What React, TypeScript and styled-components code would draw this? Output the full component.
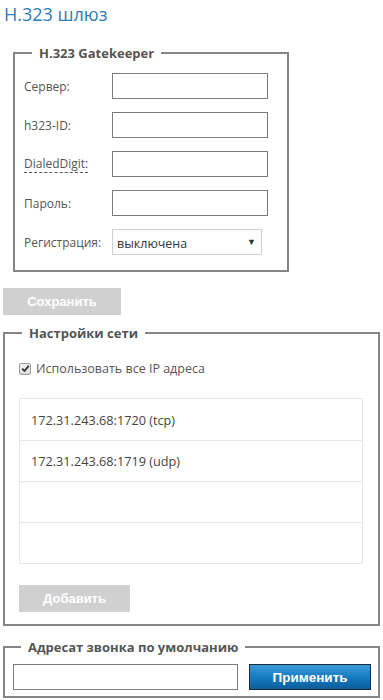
import * as React from 'react';
import styled, { createGlobalStyle } from 'styled-components';

const GlobalStyle = createGlobalStyle`
  html, body {
    margin: 0;
    padding: 0;
    background: #fff;
  }
  body {
    font-family: 'Open Sans', 'Liberation Sans', sans-serif;
    color: #555;
  }
`;

const Page = styled.div`
  width: 383px;
  padding: 2px 3px 0 3px;
  box-sizing: border-box;
`;

const Title = styled.h1`
  margin: 0 0 18px 1px;
  font-size: 18px;
  font-weight: 400;
  line-height: 24px;
  color: #2b7cb8;
`;

const Group = styled.fieldset<{ $indent?: number; $width: number }>`
  margin: 0 0 0 ${(p) => p.$indent || 0}px;
  width: ${(p) => p.$width}px;
  box-sizing: border-box;
  border: 2px solid #858585;
  padding: 0 9px 15px 9px;
  min-width: 0;
`;

const Legend = styled.legend`
  font-size: 13px;
  font-weight: 700;
  color: #555;
  padding: 0 7px;
  margin-left: 8px;
  line-height: 18px;
`;

const FormGrid = styled.div`
  display: grid;
  grid-template-columns: 88px 156px;
  row-gap: 13px;
  align-items: center;
  margin-top: 11px;
`;

const Label = styled.label<{ $dotted?: boolean }>`
  font-size: 12px;
  color: #555;
  justify-self: start;
  line-height: 17px;
  border-bottom: ${(p) => (p.$dotted ? '1px dashed #555' : 'none')};
`;

const TextInput = styled.input`
  width: 156px;
  height: 26px;
  box-sizing: border-box;
  border: 1px solid #7c7c7c;
  background: #fff;
  padding: 2px 4px;
  font-family: inherit;
  font-size: 13px;
  outline: none;
`;

const SelectBox = styled.div`
  width: 150px;
  height: 26px;
  box-sizing: border-box;
  border: 1px solid #cfcfcf;
  display: flex;
  align-items: center;
  justify-content: space-between;
  padding: 3px 5px 0 4px;
  font-size: 12.5px;
  color: #333;
`;

const Arrow = styled.span`
  font-size: 9px;
  color: #333;
  margin-top: -4px;
`;

const GrayButton = styled.button<{ $width: number }>`
  width: ${(p) => p.$width}px;
  height: 27px;
  border: none;
  background: #d0d0d0;
  color: #fff;
  font-family: 'Liberation Sans', Arial, sans-serif;
  font-weight: 700;
  font-size: 13px;
  padding: 0;
  cursor: default;
`;

const SaveRow = styled.div`
  margin: 16px 0 9px 0;
`;

const CheckRow = styled.label`
  display: flex;
  align-items: center;
  gap: 5px;
  margin: 18px 0 0 5px;
  font-size: 12.5px;
  color: #555;
`;

const CheckBox = styled.span`
  width: 12px;
  height: 12px;
  box-sizing: border-box;
  border: 1px solid #9a9a9a;
  border-radius: 2px;
  background: linear-gradient(#f4f4f4, #dcdcdc);
  display: flex;
  align-items: center;
  justify-content: center;
`;

const AddrList = styled.ul`
  list-style: none;
  margin: 21px 0 0 5px;
  padding: 0;
  width: 344px;
  box-sizing: border-box;
  border: 1px solid #e2e9ec;
`;

const AddrItem = styled.li`
  height: 41px;
  box-sizing: border-box;
  border-top: 1px solid #e2e9ec;
  padding: 0 11px;
  display: flex;
  align-items: center;
  font-size: 12.7px;
  color: #444;

  &:first-child {
    border-top: none;
  }
`;

const AddRow = styled.div`
  margin: 21px 0 0 5px;
`;

const NetGroup = styled(Group)`
  padding-bottom: 12px;
`;

const CallGroup = styled(Group)`
  margin-top: 12px;
  padding: 0 7px 6px 8px;
`;

const CallRow = styled.div`
  display: flex;
  align-items: center;
  gap: 11px;
  margin-top: 8px;
`;

const CallInput = styled(TextInput)`
  width: 225px;
`;

const BlueButton = styled.button`
  width: 122px;
  height: 26px;
  box-sizing: border-box;
  border: 1px solid #1c2a38;
  background: linear-gradient(#3a9ad8, #1479c0 55%, #0d5c9a);
  color: #fff;
  font-family: 'Liberation Sans', Arial, sans-serif;
  font-weight: 700;
  font-size: 13.5px;
  padding: 0;
`;

const fields = [
  { label: 'Сервер:' },
  { label: 'h323-ID:' },
  { label: 'DialedDigit:', dotted: true },
  { label: 'Пароль:' },
];

const addresses = ['172.31.243.68:1720 (tcp)', '172.31.243.68:1719 (udp)', '', ''];

export default function App() {
  return (
    <Page>
      <GlobalStyle />
      <Title>H.323 шлюз</Title>
      <Group $indent={10} $width={276}>
        <Legend>H.323 Gatekeeper</Legend>
        <FormGrid>
          {fields.map((f) => (
            <React.Fragment key={f.label}>
              <Label $dotted={f.dotted}>{f.label}</Label>
              <TextInput />
            </React.Fragment>
          ))}
          <Label>Регистрация:</Label>
          <SelectBox>
            <span>выключена</span>
            <Arrow>▼</Arrow>
          </SelectBox>
        </FormGrid>
      </Group>
      <SaveRow>
        <GrayButton $width={118}>Сохранить</GrayButton>
      </SaveRow>
      <NetGroup $width={377}>
        <Legend>Настройки сети</Legend>
        <CheckRow>
          <CheckBox>
            <svg width="9" height="9" viewBox="0 0 9 9">
              <path d="M1.2 4.6 L3.5 7 L7.8 1.6" fill="none" stroke="#333" strokeWidth="1.8" />
            </svg>
          </CheckBox>
          Использовать все IP адреса
        </CheckRow>
        <AddrList>
          {addresses.map((a, i) => (
            <AddrItem key={i}>{a}</AddrItem>
          ))}
        </AddrList>
        <AddRow>
          <GrayButton $width={111}>Добавить</GrayButton>
        </AddRow>
      </NetGroup>
      <CallGroup $width={377}>
        <Legend>Адресат звонка по умолчанию</Legend>
        <CallRow>
          <CallInput />
          <BlueButton>Применить</BlueButton>
        </CallRow>
      </CallGroup>
    </Page>
  );
}
